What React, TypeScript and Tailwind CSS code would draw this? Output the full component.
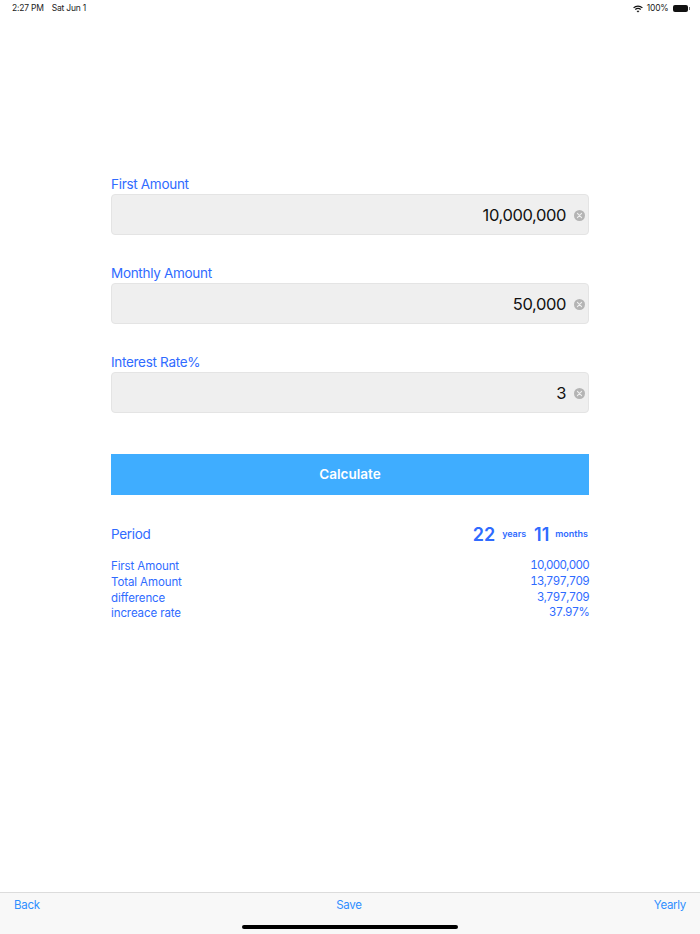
import React from 'react';

const font = { fontFamily: 'Inter, "Liberation Sans", sans-serif' };

// 入力欄
const Field: React.FC<{ label: string; value: string; className?: string }> = ({ label, value, className }) => (
  <div className={className}>
    <div className="h-[20px] text-[13.5px] leading-[20px] tracking-[-0.3px] text-[#2f6bff]">{label}</div>
    <div className="flex h-[41px] items-center justify-end rounded-[4px] border border-[#e4e4e4] bg-[#efefef] pt-[1px] pr-[3px]">
      <span className="text-[16.5px] tracking-[-0.4px] text-[#111]">{value}</span>
      <span className="ml-[8px] flex h-[11px] w-[11px] items-center justify-center rounded-full bg-[#b4b4b4]">
        <svg viewBox="0 0 10 10" className="h-[7px] w-[7px]" stroke="#efefef" strokeWidth="1.6" strokeLinecap="round">
          <path d="M2 2l6 6M8 2l-6 6" />
        </svg>
      </span>
    </div>
  </div>
);

const rows = [
  ['First Amount', '10,000,000'],
  ['Total Amount', '13,797,709'],
  ['difference', '3,797,709'],
  ['increace rate', '37.97%'],
];

export default function App() {
  return (
    <div className="flex h-[934px] w-[700px] flex-col overflow-hidden bg-white" style={font}>
      {/* status bar */}
      <div className="flex h-[17px] items-center justify-between pl-[12px] pr-[10px] text-[8.5px] tracking-[-0.2px] text-[#222]">
        <div className="flex gap-[8px]">
          <span>2:27 PM</span>
          <span>Sat Jun 1</span>
        </div>
        <div className="flex items-center gap-[3.5px]">
          <svg viewBox="0 0 12 9" className="h-[8px] w-[10px]" fill="none" stroke="#111" strokeWidth="1.5">
            <path d="M.7 3.2C3.6.4 8.4.4 11.3 3.2" />
            <path d="M2.7 5.2C4.5 3.6 7.5 3.6 9.3 5.2" />
            <path d="M6 8.8L4.3 7C5.3 6.3 6.7 6.3 7.7 7z" fill="#111" stroke="none" />
          </svg>
          <span>100%</span>
          <span className="ml-[1px] flex items-center">
            <span className="h-[7px] w-[15px] rounded-[2px] bg-[#111]" />
            <span className="ml-[1px] h-[3px] w-[1px] bg-[#777]" />
          </span>
        </div>
      </div>

      <main className="flex-1 px-[111px] pt-[157px]">
        <Field label="First Amount" value="10,000,000" />
        <Field label="Monthly Amount" value="50,000" className="mt-[28px]" />
        <Field label="Interest Rate%" value="3" className="mt-[28px]" />

        <button className="mt-[41px] h-[41px] w-full bg-[#3fadff] text-[13.5px] font-semibold text-white">
          Calculate
        </button>

        <div className="mt-[27px] flex h-[24px] items-center justify-between text-[#2f6bff]">
          <span className="text-[13.5px] tracking-[-0.3px]">Period</span>
          <div className="flex items-center pr-[1px] font-semibold">
            <span className="text-[18px]">22</span>
            <span className="ml-[7px] text-[9px] tracking-[-0.1px]">years</span>
            <span className="ml-[8px] text-[18px]">11</span>
            <span className="ml-[6px] text-[9px]">months</span>
          </div>
        </div>

        <div className="mt-[13px] flex flex-col text-[11.5px] leading-[15.8px] tracking-[-0.1px] text-[#2f6bff]">
          {rows.map(([k, v]) => (
            <div key={k} className="flex justify-between">
              <span>{k}</span>
              <span className="-mt-[1px] tracking-[-0.7px] tabular-nums">{v}</span>
            </div>
          ))}
        </div>
      </main>

      {/* toolbar */}
      <footer className="relative h-[42px] border-t border-[#dcdcdc] bg-[#f8f8f8] text-[11.5px] tracking-[-0.3px] text-[#2f8fff]">
        <div className="grid grid-cols-3 px-[14px] pt-[4px]">
          <span>Back</span>
          <span className="pr-[2px] text-center">Save</span>
          <span className="text-right">Yearly</span>
        </div>
        <div className="absolute bottom-[5px] left-[242px] h-[4px] w-[216px] rounded-full bg-black" />
      </footer>
    </div>
  );
}
